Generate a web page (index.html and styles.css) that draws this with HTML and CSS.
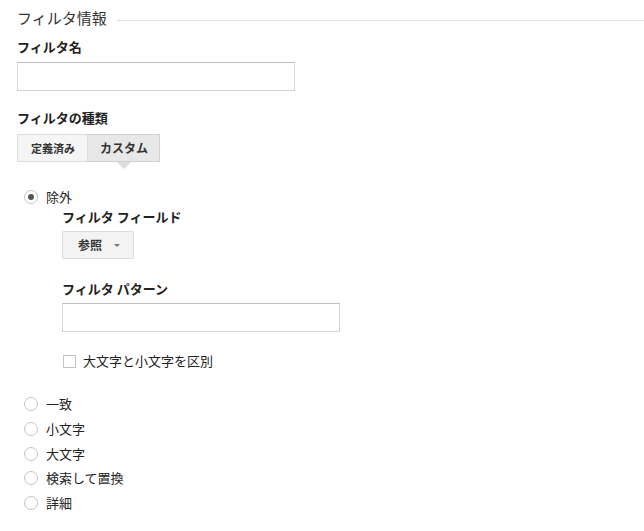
FILE: index.html
```html
<!DOCTYPE html>
<html lang="ja">
<head>
<meta charset="utf-8">
<link rel="stylesheet" href="styles.css">
</head>
<body>
<div class="page">
  <div class="section-head">
    <span class="section-title">フィルタ情報</span>
    <span class="section-line"></span>
  </div>

  <div class="label label-name">フィルタ名</div>
  <input class="text-input input-name" type="text">

  <div class="label label-type">フィルタの種類</div>
  <div class="tabs">
    <div class="tab">定義済み</div>
    <div class="tab tab-active">カスタム</div>
  </div>

  <div class="radios">
    <div class="radio-row radio-first">
      <span class="radio radio-checked"></span><span class="radio-text">除外</span>
    </div>
    <div class="sub">
      <div class="label">フィルタ フィールド</div>
      <div class="dropdown"><span>参照</span><span class="caret"></span></div>
      <div class="label label-pattern">フィルタ パターン</div>
      <input class="text-input input-pattern" type="text">
      <div class="check-row"><span class="checkbox"></span><span class="check-text">大文字と小文字を区別</span></div>
    </div>
    <div class="radio-row radio-gap"><span class="radio"></span><span class="radio-text">一致</span></div>
    <div class="radio-row"><span class="radio"></span><span class="radio-text">小文字</span></div>
    <div class="radio-row"><span class="radio"></span><span class="radio-text">大文字</span></div>
    <div class="radio-row"><span class="radio"></span><span class="radio-text">検索して置換</span></div>
    <div class="radio-row"><span class="radio"></span><span class="radio-text">詳細</span></div>
  </div>
</div>
</body>
</html>
```
FILE: styles.css
```css
* { box-sizing: border-box; }
html, body { margin: 0; padding: 0; background: #fff; }
body {
  font-family: "Noto Sans CJK JP", "Noto Sans", sans-serif;
  color: #222;
  font-size: 13px;
}
.page { padding: 6px 0 0 17px; }

.section-head { display: flex; align-items: center; height: 24px; }
.section-title { font-size: 15px; color: #333; line-height: 24px; padding-right: 10px; }
.section-line { flex: 1; height: 1px; background: #e0e0e0; margin-top: 4px; }

.label { font-weight: bold; font-size: 13px; line-height: 18px; color: #222; }
.label-name { margin-top: 8px; }
.label-type { margin-top: 18px; }
.label-pattern { margin-top: 21px; }

.text-input {
  display: block;
  width: 278px;
  height: 29px;
  border: 1px solid #d4d4d4;
  border-top-color: #c0c0c0;
  margin: 0;
  padding: 0;
  background: #fff;
  outline: none;
}
.input-name { margin-top: 6px; }
.input-pattern { margin-top: 5px; }

.tabs { display: flex; margin-top: 7px; }
.tab {
  height: 28px;
  line-height: 26px;
  font-size: 11px;
  font-weight: bold;
  color: #333;
  background: #f5f5f5;
  border: 1px solid #dcdcdc;
  padding: 0 12px 0 13px;
  width: 71px;
}
.tab-active {
  position: relative;
  background: #e8e8e8;
  border-color: #d0d0d0;
  border-left: none;
  width: 72px;
  font-size: 12px;
  padding: 0 0 0 12px;
}
.tab-active::after {
  content: "";
  position: absolute;
  left: 29px;
  bottom: -8px;
  border-left: 7px solid transparent;
  border-right: 7px solid transparent;
  border-top: 7px solid #dcdcdc;
}

.radios { margin-top: 23px; margin-left: 7px; }
.radio-row { display: flex; align-items: center; height: 24.6px; }
.radio {
  width: 14px; height: 14px;
  border: 1px solid #c4c4c4;
  border-radius: 50%;
  background: #fff;
  position: relative;
  flex: none;
}
.radio-checked::after {
  content: "";
  position: absolute;
  left: 3px; top: 3px;
  width: 6px; height: 6px;
  border-radius: 50%;
  background: #555;
}
.radio-text { margin-left: 8px; font-size: 13px; color: #222; line-height: 18px; }

.sub { margin-left: 38px; margin-top: -2px; }
.dropdown {
  display: flex;
  align-items: center;
  width: 72px;
  height: 28px;
  margin-top: 5px;
  background: #f3f3f3;
  border: 1px solid #dcdcdc;
  border-radius: 2px;
  font-size: 12px;
  font-weight: bold;
  color: #333;
  padding-left: 15px;
}
.caret {
  margin-left: 12px;
  border-left: 3px solid transparent;
  border-right: 3px solid transparent;
  border-top: 3px solid #777;
  margin-top: 2px;
}
.check-row { display: flex; align-items: center; margin-top: 21.5px; height: 16px; }
.checkbox {
  width: 13px; height: 13px;
  border: 1px solid #c4c4c4;
  background: #fff;
  margin-left: 1px;
  flex: none;
}
.check-text { margin-left: 7px; font-size: 13px; line-height: 16px; }
.radio-gap { margin-top: 23px; }
```
